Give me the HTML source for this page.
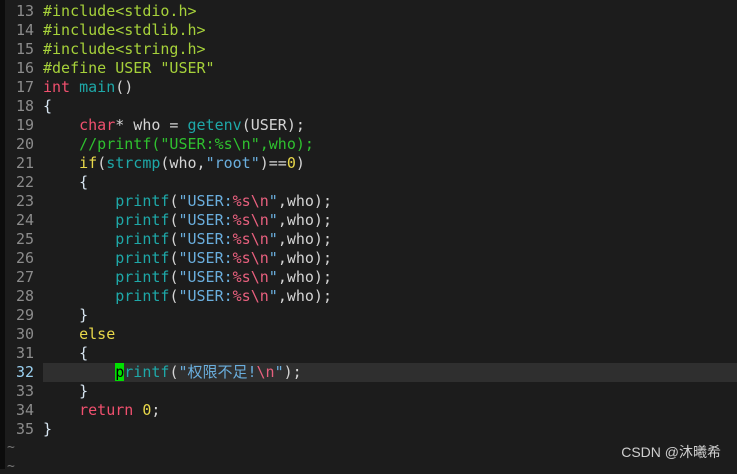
<!DOCTYPE html><html><head><meta charset="utf-8"><style>
body{margin:0;width:737px;height:469px;background:#1c1c1c;overflow:hidden;position:relative;font-family:"DejaVu Sans Mono","Liberation Mono","Noto Sans CJK SC",monospace;font-size:15px;color:#d4d4d4}
.strip{position:absolute;left:0;top:0;width:5px;height:469px;background:#0c0c0c}
.l{position:absolute;left:0;height:19px;line-height:19px;white-space:pre;width:737px}
.n{display:inline-block;width:34px;text-align:right;color:#8c8c8c;margin-right:9px}
.hlb{position:absolute;left:43px;top:363px;width:694px;height:19px;background:#2f2f2f}
.p{color:#a6d13a}.k{color:#f0506e}.f{color:#1ea8a8}.s{color:#6aaedd}.e{color:#e8607e}.c{color:#2fc12f}.y{color:#e8d84a}.b{color:#d8e6f2}
.cur{background:#00e000;color:#000}
.wm{position:absolute;right:16px;top:442px;font-family:"Liberation Sans","Noto Sans CJK SC",sans-serif;font-size:14px;color:#cfcfcf}
.t{position:absolute;left:7px;color:#777;font-size:13px}
</style></head><body><div class="strip"></div><div class="hlb"></div>
<div class="l" style="top:2px"><span class="n">13</span><span class="p">#include&lt;stdio.h&gt;</span></div>
<div class="l" style="top:21px"><span class="n">14</span><span class="p">#include&lt;stdlib.h&gt;</span></div>
<div class="l" style="top:40px"><span class="n">15</span><span class="p">#include&lt;string.h&gt;</span></div>
<div class="l" style="top:59px"><span class="n">16</span><span class="p">#define USER "USER"</span></div>
<div class="l" style="top:78px"><span class="n">17</span><span class="k">int</span> <span class="f">main</span>()</div>
<div class="l" style="top:97px"><span class="n">18</span><span class="b">{</span></div>
<div class="l" style="top:116px"><span class="n">19</span>    <span class="k">char</span>* who = <span class="f">getenv</span>(USER);</div>
<div class="l" style="top:135px"><span class="n">20</span>    <span class="c">//printf("USER:%s\n",who);</span></div>
<div class="l" style="top:154px"><span class="n">21</span>    <span class="y">if</span>(<span class="f">strcmp</span>(who,<span class="s">"root"</span>)==<span class="y">0</span>)</div>
<div class="l" style="top:173px"><span class="n">22</span>    <span class="b">{</span></div>
<div class="l" style="top:192px"><span class="n">23</span>        <span class="f">printf</span>(<span class="s">"USER:</span><span class="e">%s\n</span><span class="s">"</span>,who);</div>
<div class="l" style="top:211px"><span class="n">24</span>        <span class="f">printf</span>(<span class="s">"USER:</span><span class="e">%s\n</span><span class="s">"</span>,who);</div>
<div class="l" style="top:230px"><span class="n">25</span>        <span class="f">printf</span>(<span class="s">"USER:</span><span class="e">%s\n</span><span class="s">"</span>,who);</div>
<div class="l" style="top:249px"><span class="n">26</span>        <span class="f">printf</span>(<span class="s">"USER:</span><span class="e">%s\n</span><span class="s">"</span>,who);</div>
<div class="l" style="top:268px"><span class="n">27</span>        <span class="f">printf</span>(<span class="s">"USER:</span><span class="e">%s\n</span><span class="s">"</span>,who);</div>
<div class="l" style="top:287px"><span class="n">28</span>        <span class="f">printf</span>(<span class="s">"USER:</span><span class="e">%s\n</span><span class="s">"</span>,who);</div>
<div class="l" style="top:306px"><span class="n">29</span>    <span class="b">}</span></div>
<div class="l" style="top:325px"><span class="n">30</span>    <span class="y">else</span></div>
<div class="l" style="top:344px"><span class="n">31</span>    <span class="b">{</span></div>
<div class="l" style="top:363px"><span class="n" style="color:#9ad0f0">32</span>        <span class="cur">p</span><span class="f">rintf</span>(<span class="s">"权限不足!</span><span class="e">\n</span><span class="s">"</span>);</div>
<div class="l" style="top:382px"><span class="n">33</span>    <span class="b">}</span></div>
<div class="l" style="top:401px"><span class="n">34</span>    <span class="k">return</span> <span class="y">0</span>;</div>
<div class="l" style="top:420px"><span class="n">35</span><span class="b">}</span></div>
<div class="t" style="top:440px">~</div><div class="t" style="top:459px">~</div>
<div class="wm">CSDN @沐曦希</div>
</body></html>
